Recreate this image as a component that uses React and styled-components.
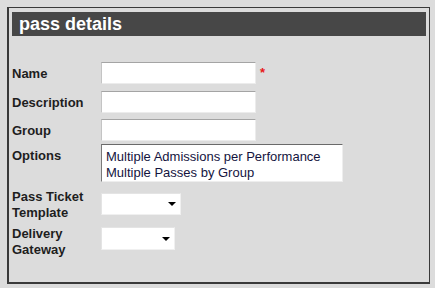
import styled, { createGlobalStyle } from 'styled-components';

const Global = createGlobalStyle`
  html, body {
    margin: 0;
    padding: 0;
    background: #dcdcdc;
    font-family: "Liberation Sans", Arial, sans-serif;
  }
`

const Page = styled.div`
  padding: 6px;
  width: 435px;
  height: 288px;
  box-sizing: border-box;
`

const Panel = styled.div`
  width: 423px;
  height: 277px;
  box-sizing: border-box;
  border: 2px solid #3a3a3a;
  border-right-width: 1px;
  border-top-width: 1px;
  padding: 4px 3px 0 3px;
  margin-top: 1px;
  margin-left: 1px;
`

const Title = styled.h2`
  margin: 0;
  height: 24px;
  line-height: 24px;
  background: #474747;
  color: #ffffff;
  font-size: 18px;
  font-weight: bold;
  padding-left: 7px;
`

const Form = styled.div`
  display: flex;
  flex-direction: column;
  padding-top: 26px;
`

const Row = styled.div`
  display: grid;
  grid-template-columns: 89px auto;
  align-items: ${(p) => (p.$top ? 'start' : 'center')};
  margin-top: ${(p) => p.$gap || 0}px;
  min-height: ${(p) => p.$h || 22}px;
`

const Label = styled.div`
  font-size: 13px;
  font-weight: bold;
  color: #1e1e1e;
  line-height: 16px;
  padding-top: 2px;
`

const Field = styled.div`
  display: flex;
  align-items: center;
`

const TextInput = styled.input`
  width: 155px;
  height: 22px;
  box-sizing: border-box;
  border: 1px solid;
  border-color: #a4a4a4 #ececec #ececec #c4c4c4;
  background: #fff;
  padding: 0 3px;
  font-size: 13px;
  outline: none;
`

const Required = styled.span`
  color: #e81818;
  font-size: 13px;
  font-weight: bold;
  margin-left: 4px;
  margin-top: -1px;
`

const ListBox = styled.div`
  width: 242px;
  height: 38px;
  box-sizing: border-box;
  background: #fff;
  border: 1px solid;
  border-color: #6a6a6a #eeeeee #eeeeee #7a7a7a;
  padding: 4px 4px 0;
  font-size: 13px;
  line-height: 16px;
  color: #14143e;
  margin-top: -2px;
`

const Option = styled.div`
  white-space: nowrap;
`

const SelectWrap = styled.div`
  position: relative;
  width: ${(p) => p.$w}px;
  height: ${(p) => p.$h || 22}px;
  margin-top: ${(p) => p.$shift || 0}px;

  &::after {
    content: '';
    position: absolute;
    right: 5px;
    top: 50%;
    margin-top: -2px;
    border-left: 4px solid transparent;
    border-right: 4px solid transparent;
    border-top: 4px solid #000;
    pointer-events: none;
  }
`

const Select = styled.select`
  appearance: none;
  -webkit-appearance: none;
  width: 100%;
  height: 100%;
  box-sizing: border-box;
  border: 1px solid;
  border-color: #e4e4e4 #f0f0f0 #f0f0f0 #e4e4e4;
  background: #fff;
  border-radius: 0;
  font-size: 13px;
  outline: none;
`

export default function App() {
  return (
    <Page>
      <Global />
      <Panel>
        <Title>pass details</Title>
        <Form>
          <Row>
            <Label>Name</Label>
            <Field>
              <TextInput />
              <Required>*</Required>
            </Field>
          </Row>
          <Row $gap={7}>
            <Label>Description</Label>
            <Field><TextInput /></Field>
          </Row>
          <Row $gap={6}>
            <Label>Group</Label>
            <Field><TextInput /></Field>
          </Row>
          <Row $gap={5} $h={38} $top>
            <Label>Options</Label>
            <Field>
              <ListBox>
                <Option>Multiple Admissions per Performance</Option>
                <Option>Multiple Passes by Group</Option>
              </ListBox>
            </Field>
          </Row>
          <Row $gap={3} $h={34}>
            <Label>Pass Ticket<br />Template</Label>
            <Field>
              <SelectWrap $w={80}>
                <Select><option></option></Select>
              </SelectWrap>
            </Field>
          </Row>
          <Row $gap={3} $h={34}>
            <Label>Delivery<br />Gateway</Label>
            <Field>
              <SelectWrap $w={74} $h={23} $shift={-5}>
                <Select><option></option></Select>
              </SelectWrap>
            </Field>
          </Row>
        </Form>
      </Panel>
    </Page>
  )
}
